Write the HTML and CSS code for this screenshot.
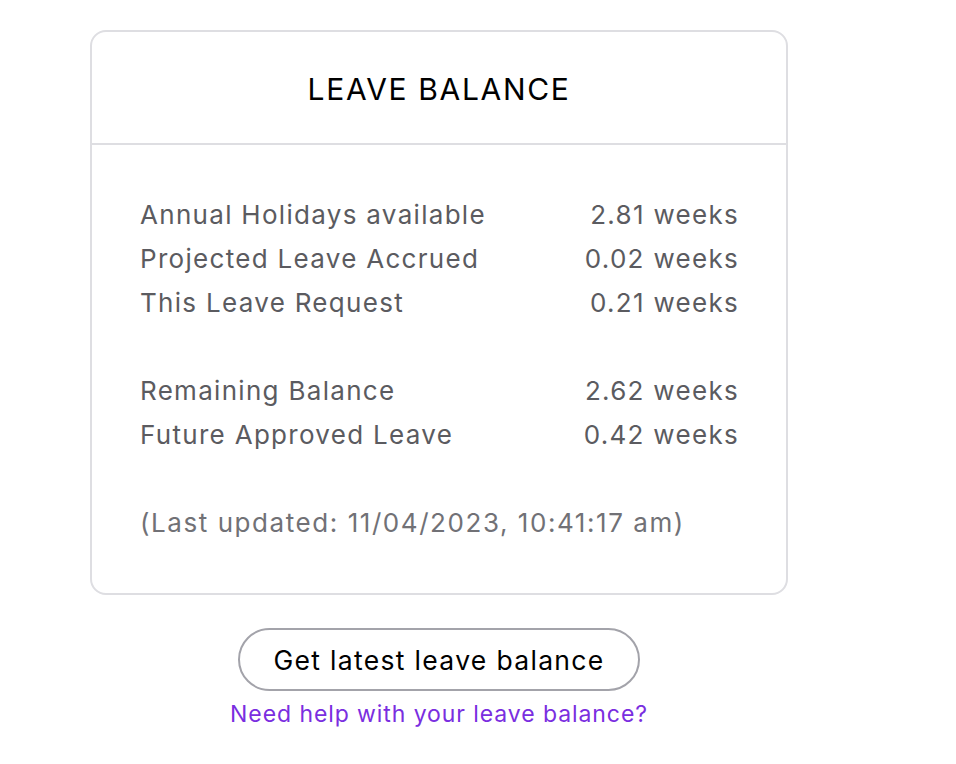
FILE: index.html
```html
<!DOCTYPE html>
<html lang="en">
<head>
    <meta charset="UTF-8">
    <meta name="viewport" content="width=device-width, initial-scale=1.0">
    <title>Leave Balance</title>
    <link rel="stylesheet" href="styles.css">
</head>
<body>

<div class="page">
    <!-- Balance card -->
    <div class="balance-card">
        <div class="card-header">
            <h2>LEAVE BALANCE</h2>
        </div>
        <div class="card-body">
            <div class="row"><span>Annual Holidays available</span><span>2.81 weeks</span></div>
            <div class="row"><span>Projected Leave Accrued</span><span>0.02 weeks</span></div>
            <div class="row"><span>This Leave Request</span><span>0.21 weeks</span></div>
            <div class="spacer"></div>
            <div class="row"><span>Remaining Balance</span><span>2.62 weeks</span></div>
            <div class="row"><span>Future Approved Leave</span><span>0.42 weeks</span></div>
            <div class="spacer"></div>
            <p class="updated">(Last updated: 11/04/2023, 10:41:17 am)</p>
        </div>
    </div>

    <!-- Actions -->
    <div class="actions">
        <button class="refresh-btn">Get latest leave balance</button>
        <a class="help-link" href="#">Need help with your leave balance?</a>
    </div>
</div>

</body>
</html>
```

FILE: styles.css
```css
body {
    margin: 0;
    padding: 0;
    background-color: #ffffff;
    font-family: Inter, "Open Sans", sans-serif;
}

.page {
    width: 698px;
    padding: 30px 0 0 90px;
}

.balance-card {
    border: 2px solid #dedee2;
    border-radius: 16px;
    box-sizing: border-box;
}

.card-header {
    height: 111px;
    display: flex;
    align-items: center;
    justify-content: center;
    border-bottom: 2px solid #dedee2;
}

.card-header h2 {
    margin: 0;
    font-size: 30px;
    font-weight: 400;
    letter-spacing: 0.055em;
    color: #000;
    padding-top: 2px;
}

.card-body {
    padding: 48px 48px 48px 48px;
    color: #5b5b60;
    font-size: 26px;
    letter-spacing: 0.05em;
}

.row {
    display: flex;
    justify-content: space-between;
    height: 44px;
    line-height: 44px;
}

.row span:last-child {
    margin-right: -1px;
}

.spacer {
    height: 44px;
}

.updated {
    margin: 0;
    line-height: 44px;
    letter-spacing: 0.06em;
    color: #717176;
}

.actions {
    display: flex;
    flex-direction: column;
    align-items: center;
    margin-top: 33px;
}

.refresh-btn {
    width: 402px;
    height: 63px;
    background: #fff;
    border: 2px solid #a3a3aa;
    border-radius: 32px;
    font-family: inherit;
    font-size: 26.5px;
    letter-spacing: 0.05em;
    color: #000;
    cursor: pointer;
}

.help-link {
    margin-top: 9px;
    font-size: 23px;
    letter-spacing: 0.04em;
    color: #7a2ee0;
    text-decoration: none;
}
```
